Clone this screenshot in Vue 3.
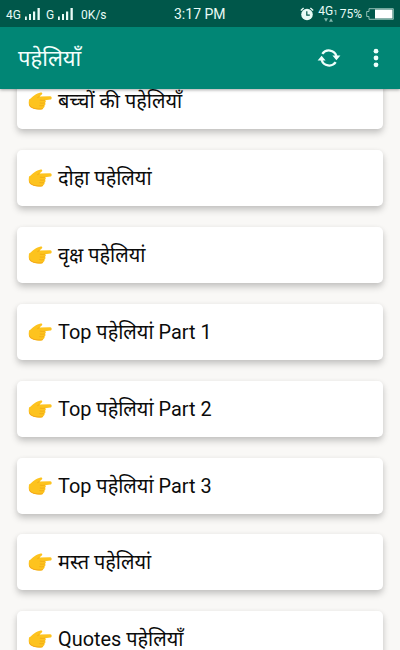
<script setup>
const items = [
  'बच्चों की पहेलियाँ',
  'दोहा पहेलियां',
  'वृक्ष पहेलियां',
  'Top पहेलियां Part 1',
  'Top पहेलियां Part 2',
  'Top पहेलियां Part 3',
  'मस्त पहेलियां',
  'Quotes पहेलियाँ',
]
</script>

<template>
  <div class="screen">
    <div class="status">
      <div class="left">
        <span>4G</span>
        <svg class="sig" width="17" height="14" viewBox="0 0 17 14"><path d="M1 9.500h1.800V13H1zM5 7h2v6H5zM9 4.500h2.200V13H9zM13.500 1h2.300v12h-2.300z" /></svg>
        <span class="g">G</span>
        <svg class="sig" width="17" height="14" viewBox="0 0 17 14"><path d="M1 9.500h1.800V13H1zM5 7h2v6H5zM9 4.500h2.200V13H9zM13.500 1h2.300v12h-2.300z" /></svg>
        <span class="speed">0K/s</span>
      </div>
      <div class="clock">3:17 PM</div>
      <div class="right">
        <svg class="alarm" width="14" height="14" viewBox="0 0 14 14">
          <circle cx="7" cy="7.500" r="5.800" fill="#e9fbf6" />
          <path d="M.8 3.600 3.600 1M13.200 3.600 10.400 1" stroke="#e9fbf6" stroke-width="1.300" fill="none" />
          <path d="M6.800 4.200v4h3" stroke="#00574a" stroke-width="1.200" fill="none" />
        </svg>
        <div class="net">
          <div class="netrow">4G<small>1</small></div>
          <svg width="9" height="4" viewBox="0 0 9 4"><path d="M0 .3h4L2 3.700zM5 3.700h4L7 .3z" fill="#83b8ad" /></svg>
        </div>
        <span class="pct">75%</span>
        <svg class="battery" width="28" height="12" viewBox="0 0 28 12">
          <path d="M3 .7h24.300v10.600H3V8.500H.7v-5H3z" fill="none" stroke="#8ebdb2" stroke-width="1" />
          <path d="M9 1.500h17.500v9H9z" fill="#fff" />
        </svg>
      </div>
    </div>
    <header class="bar">
      <h1>पहेलियाँ</h1>
      <svg class="refresh" width="24" height="20" viewBox="0 0 24 20">
        <path d="M5.300 5.800A8 8 0 0 1 19.400 8M18.700 14.200A8 8 0 0 1 4.600 12" fill="none" stroke="#eefffb" stroke-width="2.300" />
        <path d="M15.400 7.600h8l-4 4.600zM.6 12.400h8l-4-4.600z" fill="#eefffb" />
      </svg>
      <svg class="more" width="6" height="20" viewBox="0 0 6 20">
        <g fill="#eefffb"><circle cx="3" cy="3.200" r="2.400" /><circle cx="3" cy="10" r="2.400" /><circle cx="3" cy="16.800" r="2.400" /></g>
      </svg>
    </header>
    <main class="list">
      <div v-for="item in items" :key="item" class="card">
        <svg class="hand" width="24" height="20" viewBox="0 0 24 20">
          <path d="M1 8.500C2.800 7.600 4.600 5.500 6.500 4.200 8.500 2.800 10.500 2.300 12.600 1.500c1.400-.4 2.300 1 1.200 2L11.500 5.400l10.800-.1c1.700.1 1.900 2.800.1 3.200l-5.300.7c1 .8.900 2-.1 2.600.8.900.5 2.200-.6 2.700.5 1-.1 2.100-1.100 2.400-.1 1-1 1.500-2.200 1.600-3.100.2-6.200-.1-8.900-1.400C2.200 16.400.7 14.500.7 12z" fill="#fdc31e" />
          <path d="M1 12.500c.8 2.700 3.500 4.300 6.700 4.800 3 .4 5.300.3 7.300-.1-.2.700-1 1.200-2.200 1.200-3.300.2-6.200-.1-8.700-1.400-2.100-1-3.200-2.500-3.100-4.500z" fill="#f2a518" />
          <path d="M11.800 9.100c1.700.4 3.500.4 5.300.1M11.800 12c1.700.3 3.400.3 5-.1M11.400 14.600c1.600.3 3.200.3 4.700 0M11.500 5.400 9.300 6.800" fill="none" stroke="#eda313" stroke-width=".7" />
        </svg>
        <span class="label">{{ item }}</span>
      </div>
    </main>
  </div>
</template>

<style>
body {
  overflow: hidden;
}
</style>

<style scoped>
.screen {
  width: 400px;
  height: 650px;
  overflow: hidden;
  display: flex;
  flex-direction: column;
  background: #f9f8f6;
  font-family: Roboto, "Noto Sans", "Noto Sans Devanagari", sans-serif;
}
.status {
  height: 27px;
  flex: none;
  box-sizing: border-box;
  padding: 1px 6px 0 6px;
  display: grid;
  grid-template-columns: 168px 1fr auto;
  align-items: center;
  background: #00574a;
  color: #e9fbf6;
  z-index: 2;
}
.left,
.right {
  display: flex;
  align-items: center;
}
.left {
  font-size: 12px;
  padding-top: 1px;
}
.sig {
  margin-left: 3px;
  margin-top: -2px;
  fill: #e9fbf6;
}
.g {
  margin-left: 5px;
}
.speed {
  margin-left: 7px;
}
.clock {
  font-size: 14px;
}
.alarm {
  margin-right: 4px;
}
.net {
  display: flex;
  flex-direction: column;
  align-items: center;
  margin-right: 2px;
}
.netrow {
  font-size: 12px;
  line-height: 11px;
}
.netrow small {
  font-size: 8px;
}
.pct {
  font-size: 12px;
  margin-right: 4px;
}
.battery {
  margin-top: -1px;
}
.bar {
  height: 62px;
  flex: none;
  box-sizing: border-box;
  display: flex;
  align-items: center;
  padding: 0 21px 0 18px;
  background: #018675;
  box-shadow: 0 1px 3px rgba(0, 0, 0, 0.35);
  z-index: 1;
}
h1 {
  margin: 0;
  padding-top: 2px;
  flex: 1;
  font-size: 22px;
  line-height: 30px;
  font-weight: 400;
  color: #f2fffc;
}
.more {
  margin-left: 32px;
}
.list {
  margin-top: -16px;
  padding: 0 17px;
  display: flex;
  flex-direction: column;
  gap: 20.91px;
}
.card {
  height: 56px;
  flex: none;
  box-sizing: border-box;
  padding-left: 11px;
  display: flex;
  align-items: center;
  background: #fff;
  border-radius: 5px;
  box-shadow: 0 4px 7px rgba(0, 0, 0, 0.2), 0 1px 5px rgba(0, 0, 0, 0.05);
}
.hand {
  flex: none;
}
.label {
  margin-left: 6px;
  padding-top: 2px;
  font-size: 19.9px;
  line-height: 28px;
  color: #0b0b0b;
  white-space: pre;
}
</style>
